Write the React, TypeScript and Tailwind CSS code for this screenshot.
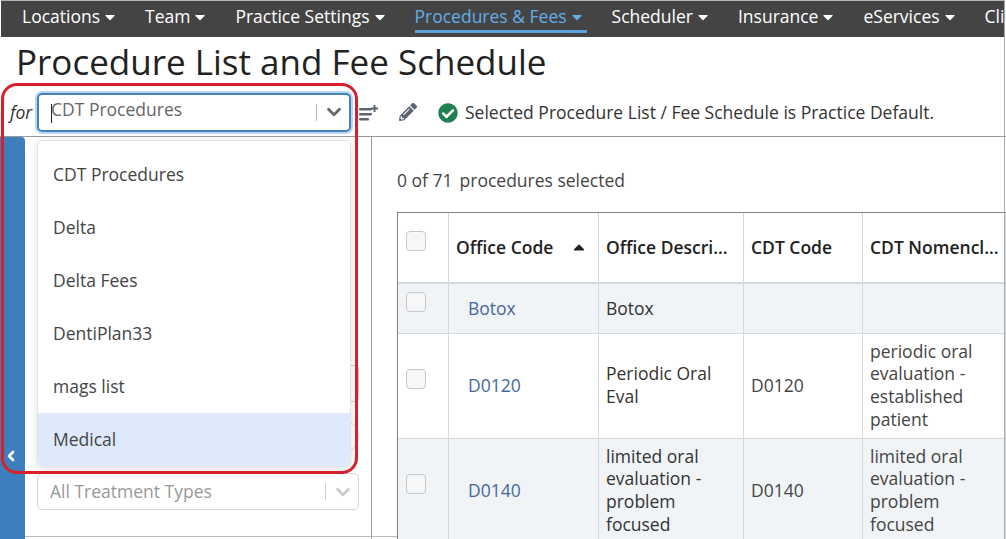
import { ChevronDown, ChevronLeft } from "lucide-react"
import { FaCaretDown, FaCaretUp, FaCheckCircle, FaPencilAlt } from "react-icons/fa"

const navItems = ["Locations", "Team", "Practice Settings", "Procedures & Fees", "Scheduler", "Insurance", "eServices", "Clinical"]
const options = ["CDT Procedures", "Delta", "Delta Fees", "DentiPlan33", "mags list", "Medical"]

function Nav() {
  return (
    <nav className="mx-[1px] flex h-[37px] shrink-0 gap-[27px] overflow-hidden border-t border-[#b5b5b5] bg-[#444444] pl-[21px] text-[17.5px] whitespace-nowrap text-white">
      {navItems.map((item) => {
        const active = item === "Procedures & Fees"
        return (
          <div
            key={item}
            className={`flex h-[32px] shrink-0 items-center gap-[2px] border-b-[3px] pt-[2px] ${active ? "-mr-[2px] border-[#5aa5e0] pr-[2px] text-[#62aee8]" : "border-transparent"}`}
          >
            {item}
            <FaCaretDown size={16} />
          </div>
        )
      })}
    </nav>
  )
}

function Toolbar() {
  return (
    <div className="flex h-[50px] shrink-0 items-center border-b border-[#999999] pl-[10px] text-[17.5px] text-[#333333]">
      <span className="mt-[1px] w-[27px] italic">for</span>
      <div className="mt-[1px] flex h-[39px] w-[314px] items-center rounded-[5px] border-2 border-[#3f82bd] pl-[12px] shadow-[0_0_0_2px_#b9d7f0]">
        <div className="mt-[3px] h-[19px] w-px shrink-0 bg-[#222222]" />
        <span className="-mt-[6px] -ml-[1px] flex-1 text-[#666666]">CDT Procedures</span>
        <div className="h-[17px] w-px bg-[#bbbbbb]" />
        <ChevronDown className="mr-[4px] ml-[6px] size-[22px] text-[#666666]" strokeWidth={3} />
      </div>
      <svg viewBox="0 0 20 16" className="mt-[2px] ml-[8px] h-[16px] w-[20px] fill-[#5a6675]">
        <rect x="0" y="3" width="13" height="2.6" rx="1" />
        <rect x="0" y="8" width="13" height="2.6" rx="1" />
        <rect x="0" y="13" width="10" height="2.6" rx="1" />
        <rect x="12" y="2.5" width="7" height="2" />
        <rect x="14.5" y="0" width="2" height="7" />
      </svg>
      <FaPencilAlt className="mt-[1px] ml-[20px] text-[#5a6675]" size={18} />
      <FaCheckCircle className="mt-[3px] ml-[21px] text-[#1f8150]" size={20} />
      <span className="mt-[1px] ml-[7px] text-[#333333]">Selected Procedure List / Fee Schedule is Practice Default.</span>
    </div>
  )
}

function Sidebar() {
  return (
    <aside className="flex h-full shrink-0">
      <div className="flex w-[25px] items-end justify-center rounded-tr-[4px] bg-[#3d7fbc] pb-[75px] pr-[3px]">
        <ChevronLeft className="size-[16px] text-white" strokeWidth={4} />
      </div>
      <div className="flex w-[347px] flex-col border-r border-[#999999] pl-[12px] pt-[228px]">
        <div className="h-[37px] w-[322px] rounded-[4px] border border-[#cccccc]" />
        <div className="mt-[18px] h-[33px] w-[322px] rounded-[16px] border border-[#dddddd]" />
        <div className="mt-[20px] flex h-[37px] w-[322px] items-center rounded-[5px] border border-[#d4d4d4] pl-[12px] text-[17.5px] text-[#999999]">
          <span className="flex-1">All Treatment Types</span>
          <div className="h-[17px] w-px bg-[#cccccc]" />
          <ChevronDown className="mr-[4px] ml-[6px] size-[22px] text-[#cccccc]" strokeWidth={3} />
        </div>
      </div>
    </aside>
  )
}

function Check({ className = "" }: { className?: string }) {
  return <div className={`size-[20px] rounded-[4px] border border-[#c4c8cc] bg-[#f7f7f7] ${className}`} />
}

const rows = [
  { code: "Botox", desc: ["Botox"], cdt: "", nom: [], h: "h-[50px]", shade: true, pad: "", checkTop: "mb-[13px]" },
  { code: "D0120", desc: ["Periodic Oral", "Eval"], cdt: "D0120", nom: ["periodic oral", "evaluation -", "established", "patient"], h: "h-[105px]", shade: false, pad: "pb-[2px]", checkTop: "mb-[12px]" },
  { code: "D0140", desc: ["limited oral", "evaluation -", "problem", "focused"], cdt: "D0140", nom: ["limited oral", "evaluation -", "problem", "focused"], h: "h-[105px]", shade: true, pad: "pb-[2px]", checkTop: "mb-[12px]" },
]

function Lines({ lines }: { lines: string[] }) {
  return (
    <>
      {lines.map((line) => (
        <div key={line} className="leading-[22.7px]">
          {line}
        </div>
      ))}
    </>
  )
}

function ProcedureTable() {
  const cell = "border-r border-b border-[#d5d8dc] px-[7px] align-middle"
  return (
    <table className="w-[608px] table-fixed border-separate border-spacing-0 border-t border-l border-[#808080] text-[17.5px] text-[#333333]">
      <colgroup>
        <col className="w-[51px]" />
        <col className="w-[150px]" />
        <col className="w-[145px]" />
        <col className="w-[119px]" />
        <col className="w-[143px]" />
      </colgroup>
      <thead>
        <tr className="h-[71px] font-semibold text-[#222222]">
          <th className={`${cell} border-b-[2px]`}>
            <Check className="mb-[13px] ml-[1px]" />
          </th>
          <th className={`${cell} border-b-[2px] text-left font-semibold`}>
            <div className="flex items-center justify-between pr-[3px]">
              Office Code
              <FaCaretUp size={18} className="mb-[2px] text-[#222222]" />
            </div>
          </th>
          <th className={`${cell} border-b-[2px] text-left font-semibold whitespace-nowrap`}>Office Descri...</th>
          <th className={`${cell} border-b-[2px] text-left font-semibold`}>CDT Code</th>
          <th className={`${cell} border-b-[2px] text-left font-semibold whitespace-nowrap`}>CDT Nomencl...</th>
        </tr>
      </thead>
      <tbody>
        {rows.map((row) => (
          <tr key={row.code} className={`${row.h} ${row.shade ? "bg-[#f1f4f7]" : "bg-white"}`}>
            <td className={`${cell} ${row.pad}`}>
              <Check className={`${row.checkTop} ml-[1px]`} />
            </td>
            <td className={`${cell} ${row.pad} pl-[19px] text-[#44689c]`}>{row.code}</td>
            <td className={`${cell} ${row.pad}`}>
              <Lines lines={row.desc} />
            </td>
            <td className={`${cell} ${row.pad} text-[#444444]`}>{row.cdt}</td>
            <td className={`${cell} ${row.pad} text-[#444444]`}>
              <Lines lines={row.nom} />
            </td>
          </tr>
        ))}
      </tbody>
    </table>
  )
}

function Dropdown() {
  return (
    <div className="absolute top-[140px] left-[37px] w-[314px] overflow-hidden rounded-[6px] border border-[#e4e4e4] bg-white pt-[7px] text-[17.5px] text-[#444444] shadow-[0_2px_8px_rgba(0,0,0,0.12)]">
      {options.map((opt) => (
        <div key={opt} className={`flex h-[53px] items-center pl-[15px] ${opt === "Medical" ? "bg-[#deeafb]" : ""}`}>
          {opt}
        </div>
      ))}
    </div>
  )
}

export default function App() {
  return (
    <div className="relative flex h-[539px] w-[1006px] flex-col overflow-hidden bg-white font-['Open_Sans',sans-serif]">
      <Nav />
      <h1 className="h-[50px] shrink-0 pl-[16px] text-[35px] leading-[50px] text-[#222222]">Procedure List and Fee Schedule</h1>
      <Toolbar />
      <div className="flex min-h-0 flex-1">
        <Sidebar />
        <main className="min-w-0 flex-1 pl-[25px]">
          <div className="flex h-[75px] items-center gap-[7px] pt-[11px] text-[17.5px] text-[#444444]">
            <span>0 of 71</span>
            <span>procedures selected</span>
          </div>
          <ProcedureTable />
        </main>
      </div>
      <Dropdown />
      <div className="absolute top-[83px] left-[1px] h-[391px] w-[357px] rounded-[16px] border-[3px] border-[#d8202c]" />
      <div className="absolute top-0 right-[1px] h-full w-px bg-[#aaaaaa]" />
      <div className="absolute bottom-[2px] left-[25px] h-px w-[372px] bg-[#bbbbbb]" />
    </div>
  )
}
